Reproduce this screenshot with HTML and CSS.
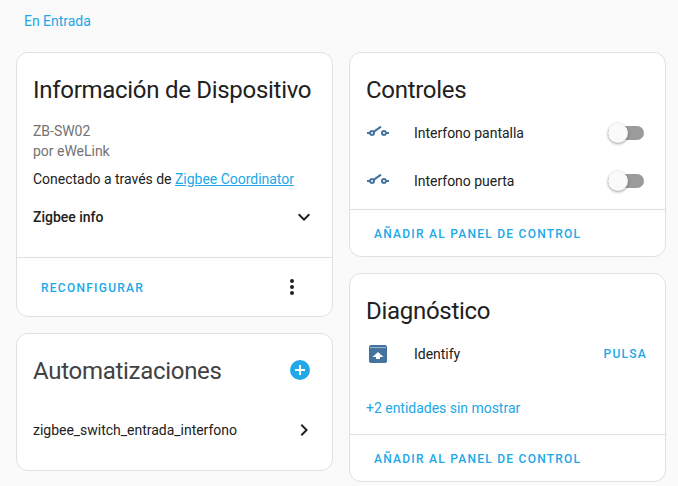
FILE: index.html
```html
<!DOCTYPE html>
<html lang="es">
<head>
<meta charset="utf-8">
<title>Dispositivo</title>
<link rel="stylesheet" href="styles.css">
</head>
<body>
<div class="area"><a class="area-link">En Entrada</a></div>
<main class="columns">
  <div class="column">
    <section class="card info-card">
      <h1 class="card-title">Información de Dispositivo</h1>
      <div class="info-body">
        <div class="muted">ZB-SW02</div>
        <div class="muted">por eWeLink</div>
        <div class="via">Conectado a través de <a class="inline-link">Zigbee Coordinator</a></div>
        <div class="expander">
          <span class="expander-label">Zigbee info</span>
          <svg class="icon" viewBox="0 0 24 24"><path d="M7.41,8.58L12,13.17L16.59,8.58L18,10L12,16L6,10L7.41,8.58Z"/></svg>
        </div>
      </div>
      <div class="actions actions-split">
        <span class="action">RECONFIGURAR</span>
        <svg class="icon" viewBox="0 0 24 24"><path d="M12,16A2,2 0 0,1 14,18A2,2 0 0,1 12,20A2,2 0 0,1 10,18A2,2 0 0,1 12,16M12,10A2,2 0 0,1 14,12A2,2 0 0,1 12,14A2,2 0 0,1 10,12A2,2 0 0,1 12,10M12,4A2,2 0 0,1 14,6A2,2 0 0,1 12,8A2,2 0 0,1 10,6A2,2 0 0,1 12,4Z"/></svg>
      </div>
    </section>
    <section class="card auto-card">
      <div class="auto-head">
        <h2 class="card-title auto-title">Automatizaciones</h2>
        <svg class="plus" viewBox="0 0 20 20"><circle cx="10" cy="10" r="10" fill="#21a8e8"/><path d="M9 5h2v4h4v2h-4v4H9v-4H5V9h4z" fill="#fff"/></svg>
      </div>
      <div class="auto-row">
        <span class="row-text">zigbee_switch_entrada_interfono</span>
        <svg class="icon" viewBox="0 0 24 24"><path d="M8.59,16.58L13.17,12L8.59,7.41L10,6L16,12L10,18L8.59,16.58Z"/></svg>
      </div>
    </section>
  </div>
  <div class="column">
    <section class="card">
      <h2 class="card-title">Controles</h2>
      <div class="entities controls">
        <div class="entity">
          <svg class="entity-icon" viewBox="0 0 24 24"><path d="M1,11H3.17C3.58,9.83 4.69,9 6,9C6.65,9 7.25,9.21 7.74,9.56L14.44,4.87L15.58,6.5L8.89,11.2C8.96,11.43 9,11.71 9,12A3,3 0 0,1 6,15C4.69,15 3.58,14.17 3.17,13H1V11M23,11V13H20.83C20.42,14.17 19.31,15 18,15A3,3 0 0,1 15,12A3,3 0 0,1 18,9C19.31,9 20.42,9.83 20.83,11H23M6,11A1,1 0 0,0 5,12A1,1 0 0,0 6,13A1,1 0 0,0 7,12A1,1 0 0,0 6,11M18,11A1,1 0 0,0 17,12A1,1 0 0,0 18,13A1,1 0 0,0 19,12A1,1 0 0,0 18,11Z"/></svg>
          <span class="row-text entity-name">Interfono pantalla</span>
          <span class="switch"><span class="knob"></span></span>
        </div>
        <div class="entity">
          <svg class="entity-icon" viewBox="0 0 24 24"><path d="M1,11H3.17C3.58,9.83 4.69,9 6,9C6.65,9 7.25,9.21 7.74,9.56L14.44,4.87L15.58,6.5L8.89,11.2C8.96,11.43 9,11.71 9,12A3,3 0 0,1 6,15C4.69,15 3.58,14.17 3.17,13H1V11M23,11V13H20.83C20.42,14.17 19.31,15 18,15A3,3 0 0,1 15,12A3,3 0 0,1 18,9C19.31,9 20.42,9.83 20.83,11H23M6,11A1,1 0 0,0 5,12A1,1 0 0,0 6,13A1,1 0 0,0 7,12A1,1 0 0,0 6,11M18,11A1,1 0 0,0 17,12A1,1 0 0,0 18,13A1,1 0 0,0 19,12A1,1 0 0,0 18,11Z"/></svg>
          <span class="row-text entity-name">Interfono puerta</span>
          <span class="switch"><span class="knob"></span></span>
        </div>
      </div>
      <div class="actions"><span class="action">AÑADIR AL PANEL DE CONTROL</span></div>
    </section>
    <section class="card">
      <h2 class="card-title">Diagnóstico</h2>
      <div class="entities">
        <div class="entity">
          <svg class="entity-icon" viewBox="0 0 24 24"><path d="M5 3h14a2 2 0 0 1 2 2v14a2 2 0 0 1-2 2H5a2 2 0 0 1-2-2V5a2 2 0 0 1 2-2z"/><path d="M4 5.200h16v.9H4z" fill="#a9bfd3"/><path d="M12 10l5.500 5H14v2h-4v-2H6.500z" fill="#fff"/></svg>
          <span class="row-text entity-name">Identify</span>
          <span class="action press">PULSA</span>
        </div>
      </div>
      <div class="more">+2 entidades sin mostrar</div>
      <div class="actions"><span class="action">AÑADIR AL PANEL DE CONTROL</span></div>
    </section>
  </div>
</main>
</body>
</html>
```
FILE: styles.css
```css
* { box-sizing: border-box; }
html, body { margin: 0; height: 486px; overflow: hidden; }
body {
  background: #fafafa;
  color: #212121;
  font-family: Roboto, "Liberation Sans", sans-serif;
  font-size: 14px;
  line-height: 20px;
  letter-spacing: -0.02px;
}
.area { padding: 11px 24px 0; height: 52px; }
.area-link { color: #21a8e8; }
.columns { display: grid; grid-template-columns: 317px 317px; gap: 16px; padding: 0 12px 0 16px; }
.column { display: flex; flex-direction: column; gap: 16px; }
.card {
  background: #fff;
  border: 1px solid #e0e0e0;
  border-radius: 12px;
}
.card-title {
  margin: 0;
  padding: 21px 16px 0;
  font-size: 24px;
  font-weight: 400;
  line-height: 32px;
  letter-spacing: -0.012em;
  color: #212121;
}
.info-card { height: 265px; display: flex; flex-direction: column; }
.info-body { padding: 15px 16px 0; flex: 1; }
.muted { color: #727272; }
.via { margin-top: 8px; }
.inline-link { color: #21a8e8; text-decoration: underline; }
.expander { display: flex; justify-content: space-between; align-items: center; margin-top: 16px; height: 24px; }
.expander-label { font-weight: 500; }
.icon { width: 24px; height: 24px; fill: #212121; flex: none; }
.actions { border-top: 1px solid #e0e0e0; padding: 15px 24px 0; height: 47px; }
.actions-split { display: flex; justify-content: space-between; align-items: center; height: 59px; padding: 0 28px 0 24px; }
.actions-split .action { margin-top: 2px; }
.action { color: #21a8e8; font-size: 12px; font-weight: 500; letter-spacing: 1.25px; line-height: 18px; display: block; }
.auto-card { height: 138px; }
.auto-head { display: flex; justify-content: space-between; align-items: center; padding-right: 22px; }
.auto-title { color: #424242; }
.plus { width: 20px; height: 20px; margin-top: 19px; }
.auto-row { display: flex; justify-content: space-between; align-items: center; padding: 0 16px; margin-top: 31px; height: 24px; }
.row-text { color: #212121; }
.entities { padding: 3px 16px 0; }
.controls { padding-bottom: 4px; }
.entity { display: flex; align-items: center; height: 48px; }
.entity-icon { width: 24px; height: 24px; fill: #44739e; flex: none; }
.entity-name { margin-left: 24px; flex: 1; }
.switch { position: relative; width: 36px; height: 14px; border-radius: 7px; background: #9b9b9b; margin-right: 5px; }
.knob { position: absolute; left: 0; top: -3px; width: 20px; height: 20px; border-radius: 50%; background: #fafafa; box-shadow: 0 1px 3px rgba(0,0,0,.4); }
.press { margin-right: 2px; }
.more { color: #21a8e8; padding: 20px 16px 16px; }
```
